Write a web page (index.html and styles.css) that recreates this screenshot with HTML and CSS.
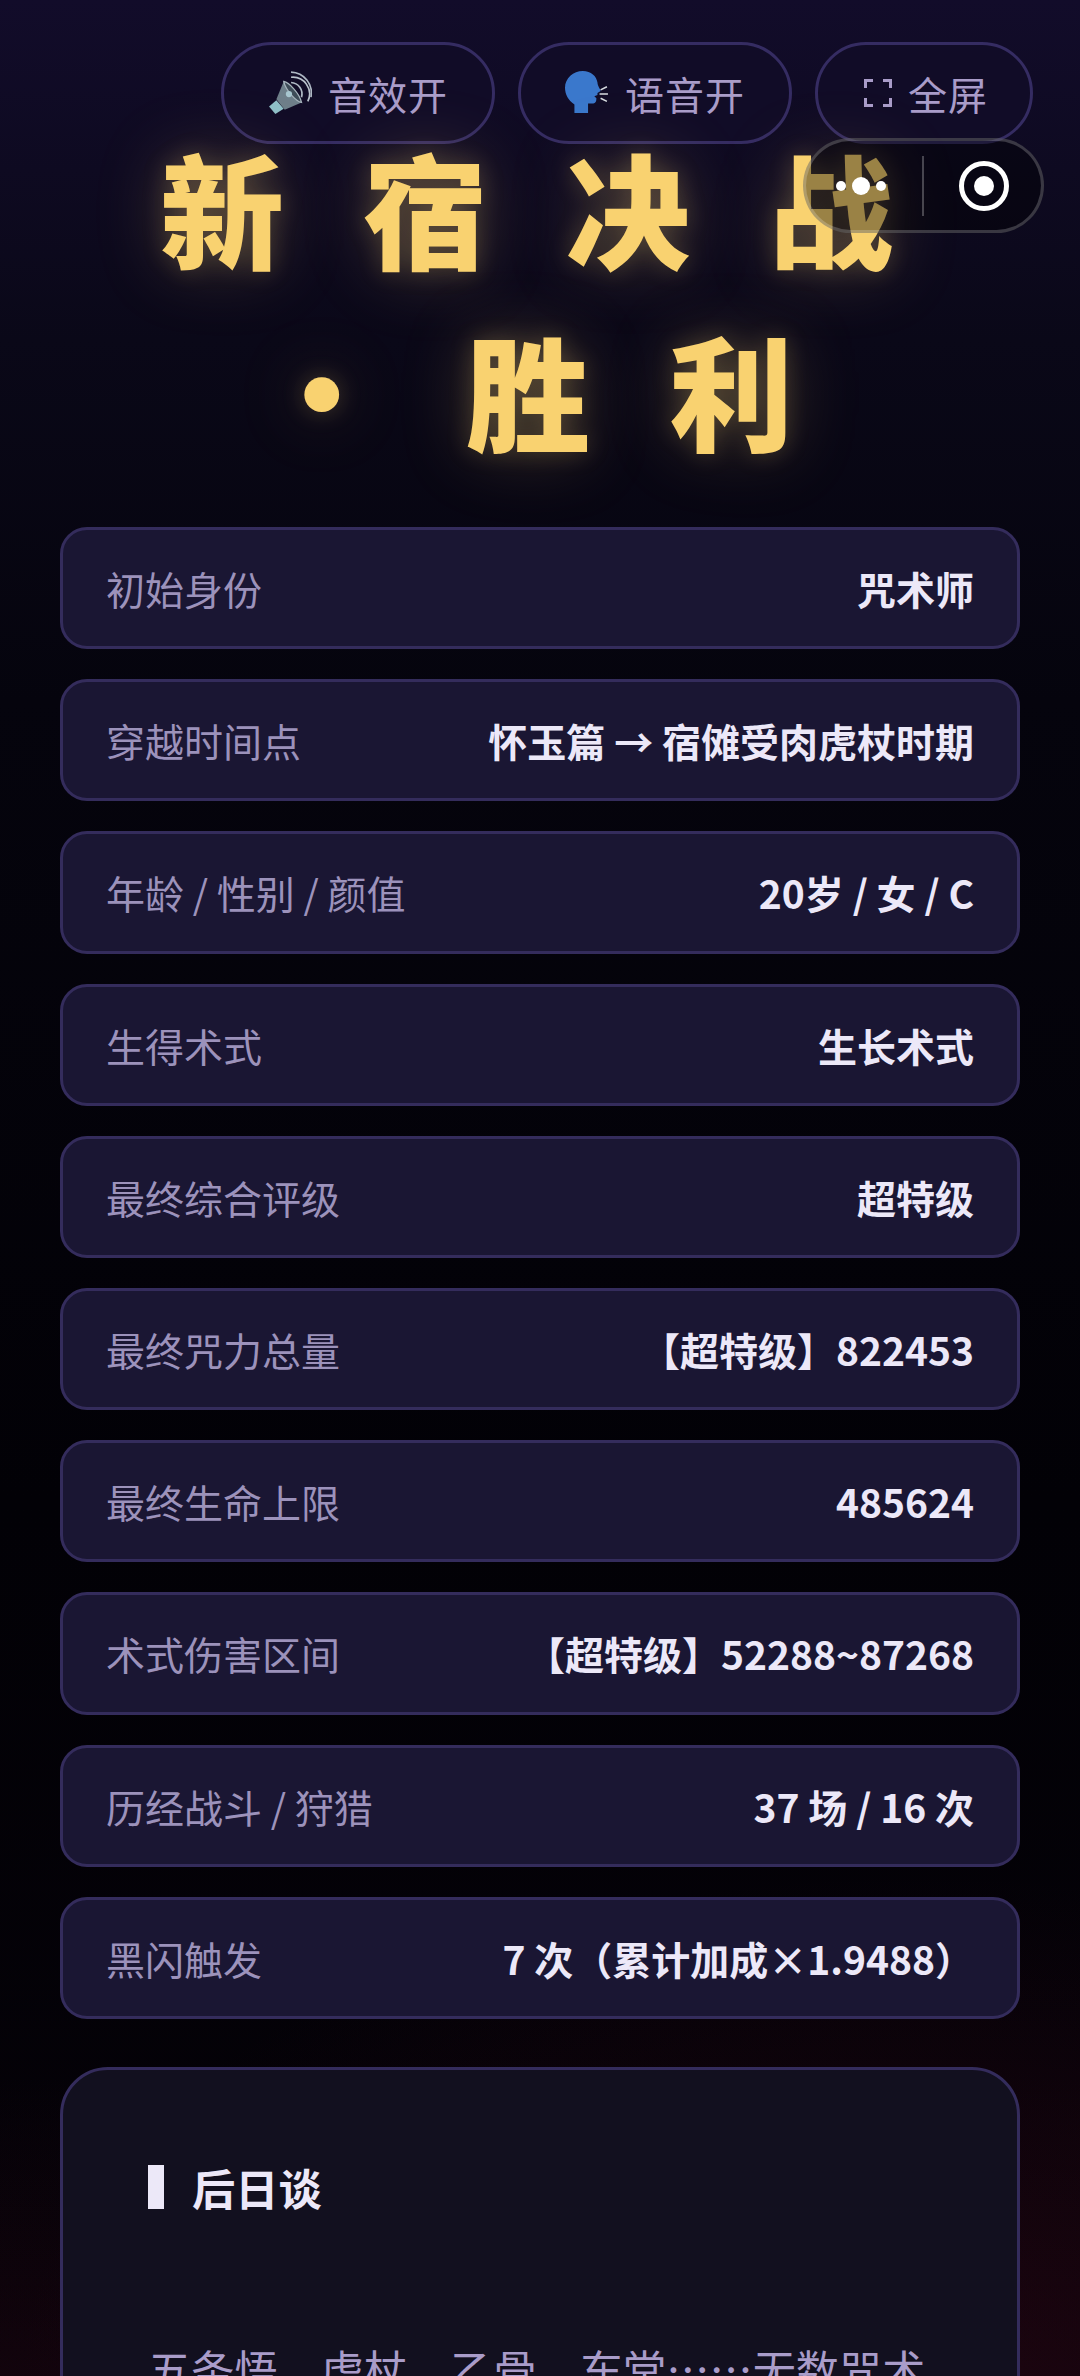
FILE: index.html
```html
<!DOCTYPE html>
<html lang="zh-CN">
<head>
    <meta charset="UTF-8">
    <meta name="viewport" content="width=device-width, initial-scale=1.0">
    <title>新宿决战 · 胜利</title>
    <link rel="stylesheet" href="styles.css">
</head>
<body>
    <div class="page">
        <div class="toolbar">
            <button class="tool-btn">
                <svg class="tool-icon" viewBox="0 0 42 42">
                    <path d="M22 6a16 16 0 0 1 16 23" fill="none" stroke="#b9c2cc" stroke-width="1.6"/>
                    <path d="M22 1a20 20 0 0 1 19 24" fill="none" stroke="#aeb8c4" stroke-width="1.6"/>
                    <path d="M22 11a11 11 0 0 1 10 14" fill="none" stroke="#aeb8c4" stroke-width="1.6"/>
                    <path d="M1 34l6 7 8-5-7-8z" fill="#8fc0c9"/>
                    <path d="M8 27L15 10c5 1 15 11 17 20l-16 7z" fill="#6e7f8a"/>
                    <path d="M15 10c5 1 15 11 17 20-5-1-15-11-17-20z" fill="#3e4c58" stroke="#a7b4bd" stroke-width="1.2"/>
                    <circle cx="20" cy="22" r="3" fill="#a7c6cf"/>
                </svg>
                <span>音效开</span>
            </button>
            <button class="tool-btn">
                <svg class="tool-icon" viewBox="0 0 42 42">
                    <path d="M17 0c8 0 13 5 14 11 0 3 3 7 3 8l-3 2 0 2-3 1 2 2c0 3-1 5-3 5h-5v9H9v-8C3 28 0 22 0 16 0 7 8 0 17 0z" fill="#3a78cc"/>
                    <path d="M33 22h8M34 18l6-3M34 26l6 3" fill="none" stroke="#d7dbe0" stroke-width="1.5"/>
                </svg>
                <span>语音开</span>
            </button>
            <button class="tool-btn">
                <svg class="tool-icon-sm" viewBox="0 0 28 28">
                    <path d="M9 1.500H1.500V9M19 1.500h7.500V9M1.500 19v7.500H9M26.500 19v7.500H19" fill="none" stroke="#a99cc9" stroke-width="3"/>
                </svg>
                <span>全屏</span>
            </button>
        </div>

        <div class="capsule">
            <div class="capsule-dots">
                <i class="dot"></i>
                <i class="dot dot-big"></i>
                <i class="dot"></i>
            </div>
            <div class="capsule-line"></div>
            <div class="capsule-target"><i></i></div>
        </div>

        <h1 class="title">
            <span class="title-line">新宿决战</span>
            <span class="title-line">· 胜利</span>
        </h1>

        <div class="stats">
            <div class="stat"><span class="stat-label">初始身份</span><span class="stat-value">咒术师</span></div>
            <div class="stat"><span class="stat-label">穿越时间点</span><span class="stat-value">怀玉篇 → 宿傩受肉虎杖时期</span></div>
            <div class="stat"><span class="stat-label">年龄 / 性别 / 颜值</span><span class="stat-value">20岁 / 女 / C</span></div>
            <div class="stat"><span class="stat-label">生得术式</span><span class="stat-value">生长术式</span></div>
            <div class="stat"><span class="stat-label">最终综合评级</span><span class="stat-value">超特级</span></div>
            <div class="stat"><span class="stat-label">最终咒力总量</span><span class="stat-value">【超特级】822453</span></div>
            <div class="stat"><span class="stat-label">最终生命上限</span><span class="stat-value">485624</span></div>
            <div class="stat"><span class="stat-label">术式伤害区间</span><span class="stat-value">【超特级】52288~87268</span></div>
            <div class="stat"><span class="stat-label">历经战斗 / 狩猎</span><span class="stat-value">37 场 / 16 次</span></div>
            <div class="stat"><span class="stat-label">黑闪触发</span><span class="stat-value">7 次（累计加成×1.9488）</span></div>
        </div>

        <div class="epilogue">
            <h2 class="epilogue-title"><i class="epilogue-bar"></i>后日谈</h2>
            <p class="epilogue-text">五条悟、虎杖、乙骨、东堂……无数咒术</p>
        </div>
    </div>
</body>
</html>
```

FILE: styles.css
```css
* {
    box-sizing: border-box;
}
html, body {
    margin: 0;
    padding: 0;
    background: #030208;
}
body {
    font-family: "Noto Sans CJK SC", "Noto Sans", sans-serif;
}
.page {
    position: relative;
    width: 1080px;
    height: 2376px;
    overflow: hidden;
    padding: 42px 60px 0;
    background:
        radial-gradient(ellipse 900px 500px at 85% 100%, rgba(90, 12, 36, 0.28), transparent 100%),
        radial-gradient(ellipse 700px 300px at 0% 100%, rgba(70, 10, 30, 0.2), transparent 100%),
        linear-gradient(180deg, #120c2a 0, #0a0818 340px, #05040d 700px, #020106 1500px, #050208 100%);
}

.toolbar {
    display: flex;
    justify-content: flex-end;
    gap: 23px;
    margin-right: -13px;
}
.tool-btn {
    display: flex;
    align-items: center;
    gap: 16px;
    height: 102px;
    padding: 0 44px;
    border: 3px solid #352c62;
    border-radius: 51px;
    background: rgba(18, 12, 40, 0.9);
    color: #a99cc9;
    font-family: inherit;
    font-size: 39px;
    letter-spacing: 1px;
}
.tool-btn:last-child {
    padding-left: 46px;
    padding-right: 42px;
}
.tool-icon {
    width: 44px;
    height: 44px;
}
.tool-icon-sm {
    width: 28px;
    height: 28px;
}

.capsule {
    position: absolute;
    top: 138px;
    left: 803px;
    width: 241px;
    height: 95px;
    display: flex;
    align-items: center;
    border: 3px solid rgba(255, 255, 255, 0.2);
    border-radius: 48px;
    background: rgba(0, 0, 0, 0.38);
}
.capsule-dots {
    width: 116px;
    padding-right: 6px;
    display: flex;
    justify-content: center;
    align-items: center;
    gap: 6px;
}
.dot {
    width: 10px;
    height: 10px;
    border-radius: 50%;
    background: #fff;
}
.dot-big {
    width: 18px;
    height: 18px;
}
.capsule-line {
    width: 2px;
    height: 60px;
    background: rgba(255, 255, 255, 0.25);
}
.capsule-target {
    width: 50px;
    height: 50px;
    margin-left: 35px;
    display: flex;
    justify-content: center;
    align-items: center;
    border: 5px solid #fff;
    border-radius: 50%;
}
.capsule-target i {
    width: 20px;
    height: 20px;
    border-radius: 50%;
    background: #fff;
}

.title {
    margin: -29px 0 0;
    padding-left: 52px;
    text-align: center;
    color: #f9d270;
    font-size: 124px;
    font-weight: 900;
    line-height: 182px;
    letter-spacing: 79px;
    word-spacing: -104px;
    text-shadow: 0 0 24px rgba(249, 210, 112, 0.22), 0 0 70px rgba(249, 210, 112, 0.26);
}
.title-line {
    display: block;
}

.stats {
    display: flex;
    flex-direction: column;
    gap: 30px;
    margin-top: 48px;
}
.stat {
    display: flex;
    justify-content: space-between;
    align-items: center;
    height: 122.200px;
    padding: 0 43px;
    border: 3px solid #342c5c;
    border-radius: 27px;
    background: #1a1633;
    font-size: 39px;
}
.stat-label {
    color: #9c92bb;
}
.stat-value {
    color: #ece8f8;
    font-weight: 700;
}

.epilogue {
    margin-top: 48px;
    height: 500px;
    padding: 86px 85px;
    border: 3px solid #342c5c;
    border-radius: 48px;
    background: #12101f;
}
.epilogue-title {
    display: flex;
    align-items: center;
    gap: 28px;
    margin: 0;
    color: #ece8f8;
    font-size: 43.2px;
    font-weight: 700;
}
.epilogue-bar {
    width: 16px;
    height: 44px;
    background: #ece8f8;
}
.epilogue-text {
    margin: 119px 0 0;
    color: #a99cc9;
    font-size: 43.2px;
}
```
